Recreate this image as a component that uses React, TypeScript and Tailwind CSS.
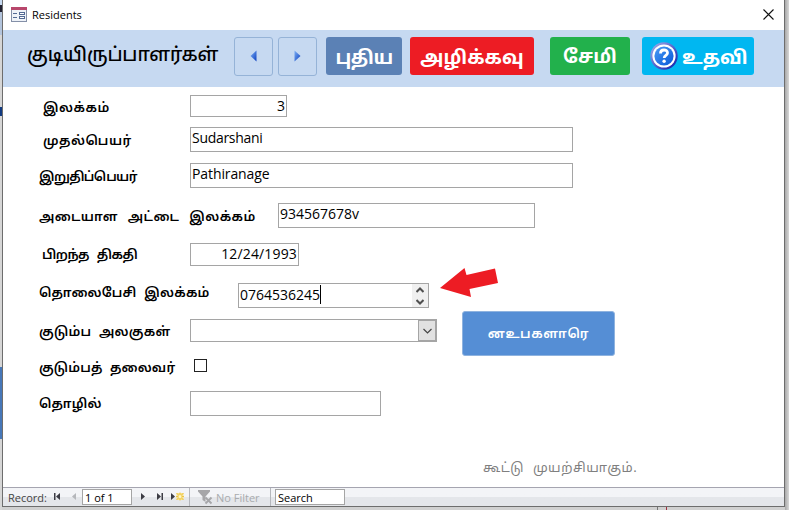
import type { ReactNode } from 'react';

const tamil = "font-['Noto_Sans_Tamil','Noto_Sans',sans-serif]";
const latin = "font-['Open_Sans','Noto_Sans',sans-serif]";

type RowProps = { label: string; labelClass: string; boxClass: string; rowClass: string; children?: ReactNode };

function Row({ label, labelClass, boxClass, rowClass, children }: RowProps) {
  return (
    <div className={'flex items-center ' + rowClass}>
      <label className={'shrink-0 whitespace-nowrap text-[13px] leading-5 font-semibold text-black ' + labelClass}>{label}</label>
      <div className={'flex h-full shrink-0 border border-[#a5a5a5] bg-white px-px text-[14px] text-black ' + latin + ' ' + boxClass}>
        {children}
      </div>
    </div>
  );
}

function FormIcon() {
  return (
    <svg width="17" height="15" viewBox="0 0 17 15" shapeRendering="crispEdges">
      <rect x="0.5" y="0.5" width="15" height="14" fill="#eef2f8" stroke="#8490a8" />
      <rect x="0" y="0" width="16" height="3" fill="#b8476c" />
      <path d="M2 6.5h4M2 10.5h4" stroke="#536a94" />
      <path d="M8.5 5.5h5v2h-5zM8.5 9.5h5v2h-5z" fill="#fff" stroke="#536a94" />
    </svg>
  );
}

function NavButton({ d }: { d: string }) {
  return (
    <div className="flex h-[39px] w-[39px] items-center justify-center rounded-[3px] border border-[#95b3d7] bg-[#c6d9f1] pb-[2px]">
      <svg width="7" height="12" viewBox="0 0 7 12">
        <defs>
          <linearGradient id="navBlue" x1="0" y1="0" x2="1" y2="1">
            <stop offset="0" stopColor="#7db0f5" />
            <stop offset="1" stopColor="#0b3fc0" />
          </linearGradient>
        </defs>
        <path d={d} fill="url(#navBlue)" />
      </svg>
    </div>
  );
}

function HelpIcon() {
  return (
    <svg width="28" height="28" viewBox="0 0 28 28">
      <defs>
        <linearGradient id="ring" x1="0" y1="0" x2="1" y2="1">
          <stop offset="0" stopColor="#a9b4ee" />
          <stop offset="1" stopColor="#0717a8" />
        </linearGradient>
        <linearGradient id="disc" x1="0" y1="0" x2="1" y2="1">
          <stop offset="0" stopColor="#4a9cf5" />
          <stop offset="1" stopColor="#0757d8" />
        </linearGradient>
      </defs>
      <circle cx="14" cy="14" r="13.7" fill="url(#ring)" />
      <circle cx="14" cy="14" r="11.6" fill="#fff" />
      <circle cx="14" cy="14" r="9.6" fill="url(#disc)" />
      <path d="M10.500 11.600c0-4.800 7-4.600 7-.6 0 2.400-3.300 2.500-3.300 5" fill="none" stroke="#fff" strokeWidth="2.8" />
      <circle cx="14.100" cy="19.300" r="1.700" fill="#fff" />
    </svg>
  );
}

function RecordBar() {
  return (
    <div className={'flex h-[19px] shrink-0 items-center border-t border-[#a5a5b0] bg-linear-to-b from-[#f3f4f7] from-50% to-[#e4e6ea] to-50% text-[11px] leading-none ' + latin}>
      <span className="w-[50px] pl-[5px] whitespace-nowrap text-[#444]">Record:</span>
      <svg width="29" height="9" viewBox="0 0 29 9" className="mt-[-2px] shrink-0">
        <path d="M1 1h1.5v7H1zM7 1v7L3 4.500z" fill="#3c3c44" />
        <path d="M23 1v7l-4-3.500z" fill="#b5b7bb" />
      </svg>
      <div className="flex h-[16px] w-[50px] shrink-0 items-center border border-[#a5a5a5] bg-white pl-[2px] text-black">1 of 1</div>
      <svg width="57" height="11" viewBox="0 0 57 11" className="mt-[-2px] shrink-0">
        <path d="M9 2v7l4-3.500zM25 2v7l4-3.500zM29.500 2H31v7h-1.500zM39 2v7l4-3.500z" fill="#3c3c44" />
        <path d="M44.500 2h7v7h-7z" fill="#f8e08a" />
        <path d="M48 1.500v8M44 5.500h8M44.500 2l7 7M51.500 2l-7 7" stroke="#ecc544" strokeWidth="1" />
        <circle cx="48" cy="5.500" r="1.500" fill="#fff7c8" />
      </svg>
      <div className="flex h-full w-[82px] shrink-0 items-center border-x border-[#b5b7bc] pl-2 whitespace-nowrap text-[#a9abae]">
        <svg width="16" height="16" viewBox="0 0 16 16" className="mr-[2px] shrink-0">
          <path d="M0 1h12v1.500L7.500 7.500V13L4.500 11V7.500L0 2.500z" fill="#a6a6a9" />
          <path d="M7.500 8.500l6 6M13.500 8.500l-6 6" stroke="#a6a6a9" strokeWidth="1.800" />
        </svg>
        No Filter
      </div>
      <div className="ml-[4px] flex h-[16px] w-[70px] shrink-0 items-center border border-[#a5a5a5] bg-white pl-[2px] text-black">Search</div>
    </div>
  );
}

export default function App() {
  return (
    <div className={'flex h-[510px] w-[789px] overflow-hidden bg-[#d0d0d0] ' + tamil}>
      <div className="flex w-[2px] shrink-0 flex-col bg-[#d6d6d6]">
        <div className="h-[5px] bg-[#c6d9f1]" />
        <div className="h-[7px] bg-[#223]" />
        <div className="h-[23px] bg-[#b3c4dc]" />
        <div className="mt-[72px] h-[9px] bg-[#123a80]" />
        <div className="mt-[251px] h-[72px] bg-[#4677b8]" />
      </div>
      <div className="flex w-[783px] shrink-0 flex-col">
        <div className="flex h-[507px] shrink-0 flex-col border border-t-0 border-[#6d6d6d] bg-white">
          <div className={'flex h-[30px] shrink-0 items-center text-[11px] text-black ' + latin}>
            <div className="mb-[2px] ml-[8px] shrink-0"><FormIcon /></div>
            <span className="ml-[4px]">Residents</span>
            <svg width="11" height="11" viewBox="0 0 11 11" className="mr-[10px] mb-[2px] ml-auto">
              <path d="M.5.500l10 10M10.500.500l-10 10" stroke="#111" strokeWidth="1.100" />
            </svg>
          </div>

          <div className="flex h-[57px] shrink-0 items-start bg-[#c6d9f1] pt-[7px] text-[19px] leading-none font-bold text-white">
            <h1 className="ml-[24px] w-[207px] pt-[5px] text-[19px] leading-7 font-medium tracking-[-0.15px] whitespace-nowrap text-black">குடியிருப்பாளர்கள்</h1>
            <NavButton d="M6.500.500v11L.5 6z" />
            <div className="ml-[5px]"><NavButton d="M.5.500v11L6.500 6z" /></div>
            <div className="ml-[9px] flex h-[38px] w-[76px] items-center justify-center rounded-[3px] bg-[#5b81b5] pt-[6px] tracking-[-0.5px]">புதிய</div>
            <div className="ml-[8px] flex h-[38px] w-[124px] items-center justify-center rounded-[3px] bg-[#ed1c24] pt-[6px]">அழிக்கவு</div>
            <div className="ml-[16px] flex h-[38px] w-[80px] items-center justify-center rounded-[3px] bg-[#22b14c] pt-[5px]">சேமி</div>
            <div className="ml-[12px] flex h-[38px] w-[112px] items-center rounded-[3px] bg-[#00b7f1] pl-[8px]">
              <HelpIcon />
              <span className="ml-[4px] pt-[7px]">உதவி</span>
            </div>
          </div>

          <div className="flex min-h-0 grow pt-[8px]">
            <div className="flex w-[437px] shrink-0 flex-col">
              <Row label="இலக்கம்" rowClass="h-[22px]" labelClass="w-[187px] pl-[40px] pt-[5px] tracking-[0.5px]" boxClass="w-[97px] justify-end leading-[20px]">3</Row>
              <Row label="முதல்பெயர்" rowClass="mt-[10px] h-[25px]" labelClass="w-[187px] pl-[40px] pt-[4px] tracking-[0.5px]" boxClass="w-[383px] leading-[20px] tracking-[-0.3px]">Sudarshani</Row>
              <Row label="இறுதிப்பெயர்" rowClass="mt-[11px] h-[25px]" labelClass="w-[187px] pl-[36px] pt-[4px] tracking-[-0.6px]" boxClass="w-[383px] leading-[20px] tracking-[-0.1px]">Pathiranage</Row>
              <Row label="அடையாள அட்டை இலக்கம்" rowClass="mt-[15px] h-[25px]" labelClass="w-[275px] pl-[36px] pt-[4px] tracking-[0.45px] [word-spacing:6px]" boxClass="w-[257px] leading-[20px]">934567678v</Row>
              <Row label="பிறந்த திகதி" rowClass="mt-[15px] h-[23px]" labelClass="w-[187px] pl-[39px] pt-[2px] tracking-[-0.5px] [word-spacing:5px]" boxClass="w-[109px] justify-end leading-[19px] tracking-[0.15px]">12/24/1993</Row>
              <Row label="தொலைபேசி இலக்கம்" rowClass="mt-[17px] h-[25px]" labelClass="w-[235px] pl-[36px] pb-[4px] tracking-[0.25px] [word-spacing:4px]" boxClass="w-[191px] leading-[20px]">
                <span className="my-px mr-auto h-[19px] border-r border-black leading-[19px]">0764536245</span>
                <span className="-mr-px flex w-[16px] items-center justify-center bg-[#f0f0f0]">
                  <svg width="8" height="19" viewBox="0 0 8 19" fill="none" stroke="#505050" strokeWidth="2">
                    <path d="M.5 6L4 2.500 7.500 6M.5 14L4 17.500 7.500 14" />
                  </svg>
                </span>
              </Row>
              <Row label="குடும்ப அலகுகள்" rowClass="mt-[11px] h-[23px]" labelClass="w-[187px] pl-[36px] pt-[4px] tracking-[0.25px] [word-spacing:4px]" boxClass="w-[247px]">
                <span className="-mr-px ml-auto flex w-[18px] items-center justify-center border border-[#a5a5a5] bg-[#e1e1e1]">
                  <svg width="9" height="6" viewBox="0 0 9 6" fill="none" stroke="#444" strokeWidth="1.200">
                    <path d="M.5 1l4 4 4-4" />
                  </svg>
                </span>
              </Row>
              <div className="mt-[15px] flex h-[20px] items-center">
                <label className="w-[191px] pt-[4px] pl-[36px] text-[13px] leading-5 font-semibold tracking-[0.15px] [word-spacing:4px] whitespace-nowrap text-black">குடும்பத் தலைவர்</label>
                <span className="mb-[4px] size-[13px] border border-[#222] bg-white" />
              </div>
              <Row label="தொழில்" rowClass="mt-[14px] h-[25px]" labelClass="w-[187px] pl-[36px] pt-[3px] tracking-[0.2px]" boxClass="w-[191px]" />
            </div>

            <div className="flex flex-col pt-[173px]">
              <svg width="60" height="30" viewBox="0 0 60 30">
                <path d="M0 20L24.500 0l2 7L55 .5l3 14.500L29.500 21l1.500 8z" fill="#ed1c24" />
              </svg>
              <div className="mt-[13px] ml-[22px] flex h-[45px] w-[153px] items-center justify-center rounded-[3px] border border-[#8fb3df] bg-[#558ed5] pt-[5px] text-[13px] font-semibold tracking-[0.6px] text-white">னஉபகளாரெ</div>
              <div className="mt-[103px] ml-[43px] text-[13px] leading-5 tracking-[0.5px] [word-spacing:5px] whitespace-nowrap text-[#7f7f7f]">கூட்டு முயற்சியாகும்.</div>
            </div>
          </div>

          <RecordBar />
        </div>
        <div className="flex h-[3px] pl-[655px]">
          <span className="w-px bg-[#777]" />
          <span className="ml-[8px] w-px bg-[#a03040]" />
        </div>
      </div>
      <div className="w-[4px] bg-linear-to-r from-[#a9a9a9] to-[#d8d8d8]" />
    </div>
  );
}
